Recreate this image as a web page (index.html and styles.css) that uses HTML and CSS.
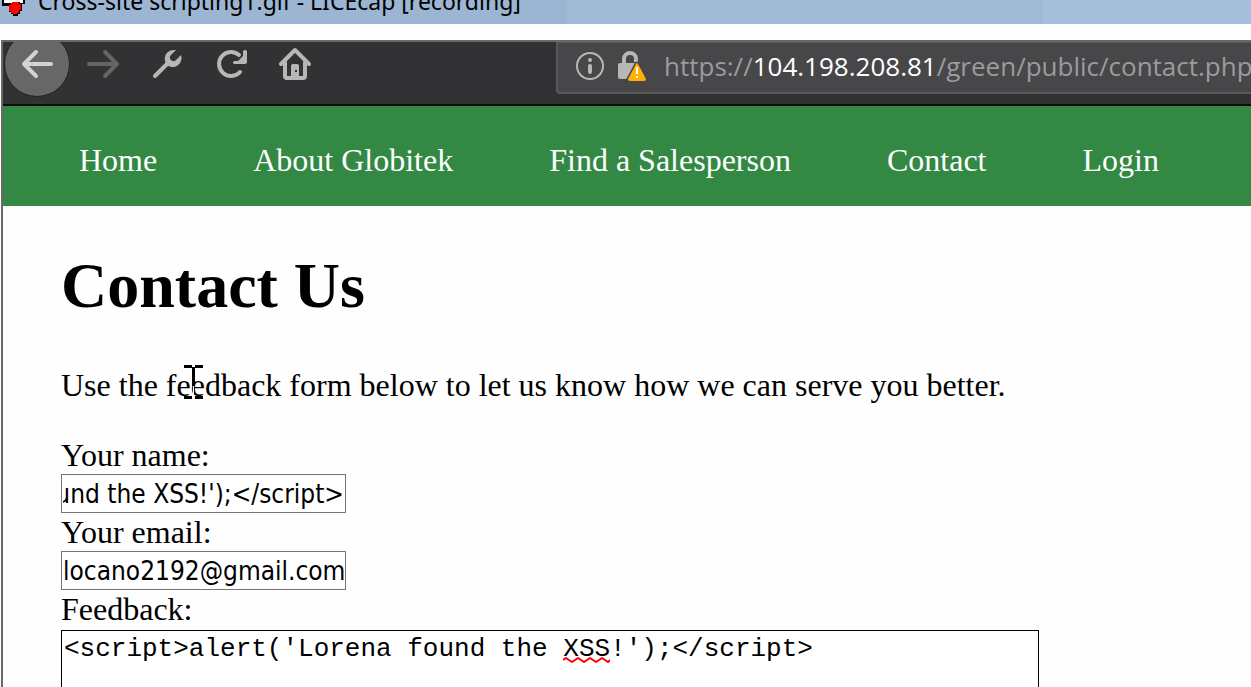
FILE: index.html
```html
<!DOCTYPE html>
<html lang="en">
<head>
<meta charset="utf-8">
<title>Contact Us</title>
<link rel="stylesheet" href="styles.css">
</head>
<body>
<header class="titlebar">
  <svg class="app-icon" width="26" height="16" viewBox="0 0 26 16" shape-rendering="crispEdges" aria-hidden="true">
    <path d="M2 0H25V4H21V6H2Z" fill="#000"/>
    <path d="M4 0H23V3H4Z" fill="#fff"/>
    <path d="M12 2H20V4H22V11H20V14H18V16H13V14H11V12H9V4H12Z" fill="#000"/>
    <path d="M12 2H19V4H21V10H19V13H17V14H13V13H11V11H9V5H11V3H12Z" fill="#f00"/>
  </svg>
  <span class="window-title">Cross-site scripting1.gif - LICEcap [recording]</span>
</header>
<div class="browser">
  <div class="toolbar">
    <button class="tool back" aria-label="Back">
      <svg width="34" height="34" viewBox="0 0 34 34" fill="none" stroke="#d2d2d3" stroke-width="4" stroke-linecap="round" stroke-linejoin="round"><path d="M31 17H4M16 5L4 17L16 29"/></svg>
    </button>
    <button class="tool" aria-label="Forward">
      <svg width="34" height="34" viewBox="0 0 34 34" fill="none" stroke="#656566" stroke-width="4" stroke-linecap="round" stroke-linejoin="round"><path d="M3 17H31M19 5L31 17L19 29"/></svg>
    </button>
    <button class="tool" aria-label="Developer tools">
      <svg width="34" height="34" viewBox="0 0 34 34"><path d="M5 29L18 16" stroke="#b7b7b7" stroke-width="4" stroke-linecap="round"/><path d="M25 3A9 9 0 0 0 15 14A8 8 0 0 0 22 20A9 9 0 0 0 31 8L26 13A3 3 0 0 1 21 8L26 3Z" fill="#b7b7b7"/></svg>
    </button>
    <button class="tool" aria-label="Reload">
      <svg width="34" height="34" viewBox="0 0 34 34"><path d="M25 8A12 12 0 1 0 26 25" fill="none" stroke="#b7b7b7" stroke-width="4" stroke-linecap="round"/><path d="M33 4V15Q33 17 31 17H20Q18 16 20 14L24 14L29 9V4Q31 2 33 4Z" fill="#b7b7b7"/></svg>
    </button>
    <button class="tool" aria-label="Home">
      <svg width="34" height="34" viewBox="0 0 34 34"><path d="M3 17L17 3L31 17M7 15V29Q7 31 9 31H25Q27 31 27 29V15" fill="none" stroke="#b7b7b7" stroke-width="4" stroke-linecap="round" stroke-linejoin="round"/><path d="M13 31V19Q13 17 15 17H19Q21 17 21 19V31Z" fill="#b7b7b7"/><path d="M17 23H19V25H17Z" fill="#323234"/></svg>
    </button>
    <div class="urlbar">
      <svg width="28" height="28" viewBox="0 0 28 28" aria-hidden="true"><circle cx="14" cy="14" r="13" fill="none" stroke="#b7b7b8" stroke-width="2"/><circle cx="14" cy="8" r="2" fill="#b7b7b8"/><path d="M14 14V20" stroke="#b7b7b8" stroke-width="4" stroke-linecap="round"/></svg>
      <svg width="30" height="32" viewBox="0 0 30 32" aria-hidden="true"><path d="M8 14V9A6 6 0 0 1 20 9V12" fill="none" stroke="#b7b7b8" stroke-width="4"/><path d="M4 13H22V29H4Q2 29 2 27V15Q2 13 4 13Z" fill="#b7b7b8"/><path d="M20 14Q21 12 22 14L30 29Q30 31 28 31H14Q12 31 12 29Z" fill="#ffb000" stroke="#474749" stroke-width="3" paint-order="stroke" stroke-linejoin="round"/><path d="M21 17V24M21 26V28" stroke="#fff" stroke-width="2"/></svg>
      <span class="url">https://<span class="host">104.198.208.81</span>/green/public/contact.php</span>
    </div>
  </div>
  <nav class="nav">
    <a href="#">Home</a>
    <a href="#">About Globitek</a>
    <a href="#">Find a Salesperson</a>
    <a href="#">Contact</a>
    <a href="#">Login</a>
  </nav>
  <main class="content">
    <h1>Contact Us</h1>
    <p class="intro">Use the feedback form below to let us know how we can serve you better.
      <svg class="pointer" width="20" height="34" viewBox="0 0 20 34" shape-rendering="crispEdges" aria-hidden="true"><path d="M0 0H8V3H0ZM11 0H19V3H11ZM8 2H11V21H8ZM0 31H8V34H0ZM11 31H19V34H11Z" fill="#000"/><path d="M9 21H10V31H9Z" fill="#fff"/></svg>
    </p>
    <form class="form">
      <label for="name">Your name:</label>
      <input id="name" class="field" type="text" value="&lt;script&gt;alert('Lorena found the XSS!');&lt;/script&gt;">
      <label for="email">Your email:</label>
      <input id="email" class="field" type="text" value="locano2192@gmail.com">
      <label for="feedback">Feedback:</label>
      <div class="feedback">
        <textarea id="feedback" spellcheck="false">&lt;script&gt;alert('Lorena found the XSS!');&lt;/script&gt;</textarea>
        <svg class="squiggle" width="47" height="6" viewBox="0 0 47 6" aria-hidden="true"><path d="M0 3L3 1L9 5L15 1L21 5L27 1L33 5L39 1L45 5L47 3" fill="none" stroke="#f00" stroke-width="2" stroke-linejoin="round"/></svg>
      </div>
    </form>
  </main>
</div>
<script src="main.js"></script>
</body>
</html>
```
FILE: main.js
```js
const nameField = document.getElementById("name");
nameField.scrollLeft = nameField.scrollWidth;
```
FILE: styles.css
```css
* { box-sizing: border-box; }
body {
  margin: 0;
  height: 100vh;
  overflow: hidden;
  display: flex;
  flex-direction: column;
  background: #fefefe;
  color: #000;
  font-family: "Liberation Serif", "Times New Roman", serif;
  font-size: 32px;
  line-height: 36px;
}
.titlebar {
  height: 24px;
  flex: none;
  display: flex;
  gap: 12px;
  overflow: hidden;
  background: linear-gradient(90deg, #9bb5d2 0 567px, #a1bad6 567px 1043px, #a6c0dc 1043px);
}
.app-icon { flex: none; }
.window-title {
  margin-top: -13px;
  font: 23px/28px "Noto Sans", sans-serif;
  white-space: nowrap;
}
.browser {
  flex: 1;
  min-height: 0;
  overflow: hidden;
  margin: 16px 0 0 1px;
  border: solid #69696a;
  border-width: 2px 0 0 2px;
}
.toolbar {
  display: flex;
  height: 64px;
  overflow: hidden;
  background: #323234;
  border-bottom: 2px solid #0c0c0d;
}
.tool {
  flex: none;
  width: 64px;
  height: 64px;
  padding: 0;
  border: 0;
  background: none;
  display: grid;
  place-items: center;
  margin-top: -10px;
}
.back {
  margin: -10px 2px 0;
  border-radius: 50%;
  background: #676768;
  box-shadow: 0 0 0 1px #252526;
}
.urlbar {
  flex: 1;
  min-width: 0;
  height: 53px;
  margin: -1px 0 0 229px;
  padding: 0 0 4px 18px;
  display: flex;
  align-items: center;
  gap: 12px;
  overflow: hidden;
  background: #474749;
  border: 2px solid #59595b;
  border-right: 0;
  border-radius: 0 0 0 4px;
}
.urlbar svg { flex: none; }
.url {
  margin-left: 6px;
  font: 26px/36px "Open Sans", "Noto Sans", sans-serif;
  color: #9b9b9d;
  white-space: nowrap;
}
.host { color: #fff; }
.nav {
  display: flex;
  gap: 96px;
  padding: 36px 76px 28px;
  background: #338844;
}
.nav a { color: #fff; text-decoration: none; white-space: nowrap; }
.content { padding: 43px 58px 0; }
h1 { margin: 0; font-size: 64px; line-height: 74px; }
.intro { position: relative; margin: 44px 0 33px; }
.pointer { position: absolute; left: 123px; top: -2px; }
.form { display: flex; flex-direction: column; align-items: flex-start; }
label { line-height: 38px; }
.field {
  width: 285px;
  height: 39px;
  padding: 1px 1px 0;
  border: 1px solid #767676;
  background: #fff;
  font: 26px/36px "DejaVu Sans Condensed", "Noto Sans", sans-serif;
  color: #000;
}
.feedback {
  position: relative;
  width: 978px;
  max-width: 100%;
  margin-top: 2px;
  font: 26px/32px "Liberation Mono", "Courier New", monospace;
}
textarea {
  display: block;
  width: 100%;
  height: 160px;
  padding: 2px;
  border: 1px solid #000;
  background: #fff;
  font: inherit;
  color: #000;
  resize: none;
}
.squiggle { position: absolute; left: calc(3px + 32ch); top: 27px; }
```
